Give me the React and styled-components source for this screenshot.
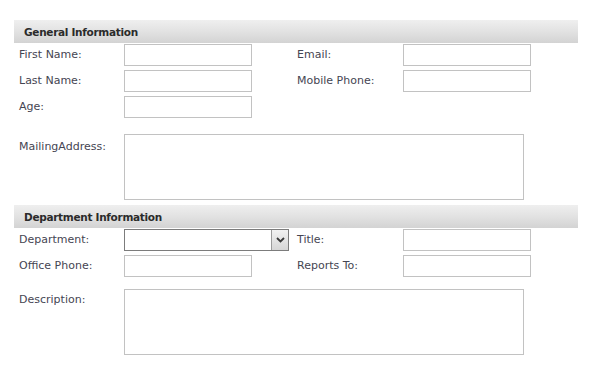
import styled, { createGlobalStyle } from "styled-components";

const GlobalStyle = createGlobalStyle`
  body {
    margin: 0;
    background: #ffffff;
    font-family: "DejaVu Sans", Tahoma, sans-serif;
  }
`;

const Page = styled.div`
  padding: 20px 0 0 14px;
  width: 564px;
`;

const SectionHeader = styled.div`
  height: 23px;
  display: flex;
  align-items: center;
  padding-left: 10px;
  background: linear-gradient(to bottom, #efefef 0%, #e2e2e2 50%, #d3d3d3 100%);
  color: #2b2b2b;
  font-size: 10.5px;
  letter-spacing: -0.3px;
  font-weight: bold;
  margin-top: ${(p) => p.$top || 0}px;
`;

const Grid = styled.div`
  display: grid;
  grid-template-columns: 105px 173px 106px 128px;
  row-gap: 4px;
  padding: 1px 0 0 5px;
`;

const Label = styled.label`
  font-size: 11px;
  line-height: 14px;
  color: #454552;
  padding-top: ${(p) => p.$pad || 4}px;
`;

const TextInput = styled.input`
  box-sizing: border-box;
  width: 128px;
  height: 22px;
  border: 1px solid #c2c2c2;
  padding: 0 3px;
  margin: 0;
  outline: none;
  background: #fff;
`;

const TextArea = styled.textarea`
  box-sizing: border-box;
  grid-column: 2 / span 3;
  width: 400px;
  height: 66px;
  border: 1px solid #c2c2c2;
  margin: ${(p) => p.$top || 0}px 0 0 0;
  resize: none;
  outline: none;
  display: block;
`;

const SelectBox = styled.div`
  box-sizing: border-box;
  width: 165px;
  height: 22px;
  border: 1px solid #7c7c7c;
  background: #fff;
  display: flex;
  justify-content: flex-end;
`;

const SelectButton = styled.div`
  width: 16px;
  height: 100%;
  border-left: 1px solid #9c9c9c;
  background: linear-gradient(to bottom, #f2f2f2, #d6d6d6);
  display: flex;
  align-items: center;
  justify-content: center;
`;

const Spacer = styled.div``;

const LabelTop = styled(Label)`
  margin-top: ${(p) => p.$top || 0}px;
`;

const Chevron = () => (
  <svg width="9" height="6" viewBox="0 0 9 6">
    <path d="M1 1 L4.5 4.5 L8 1" fill="none" stroke="#3a3a3a" strokeWidth="1.8" />
  </svg>
);

export default function App() {
  return (
    <Page>
      <GlobalStyle />
      <SectionHeader>General Information</SectionHeader>
      <Grid>
        <Label>First Name:</Label>
        <TextInput />
        <Label>Email:</Label>
        <TextInput />

        <Label>Last Name:</Label>
        <TextInput />
        <Label>Mobile Phone:</Label>
        <TextInput />

        <Label>Age:</Label>
        <TextInput />
        <Spacer />
        <Spacer />

        <LabelTop $top={12} $pad={6}>MailingAddress:</LabelTop>
        <TextArea $top={12} />
      </Grid>

      <SectionHeader $top={5}>Department Information</SectionHeader>
      <Grid>
        <Label>Department:</Label>
        <SelectBox>
          <SelectButton>
            <Chevron />
          </SelectButton>
        </SelectBox>
        <Label>Title:</Label>
        <TextInput />

        <Label>Office Phone:</Label>
        <TextInput />
        <Label>Reports To:</Label>
        <TextInput />

        <LabelTop $top={8} $pad={4}>Description:</LabelTop>
        <TextArea $top={8} />
      </Grid>
    </Page>
  );
}
